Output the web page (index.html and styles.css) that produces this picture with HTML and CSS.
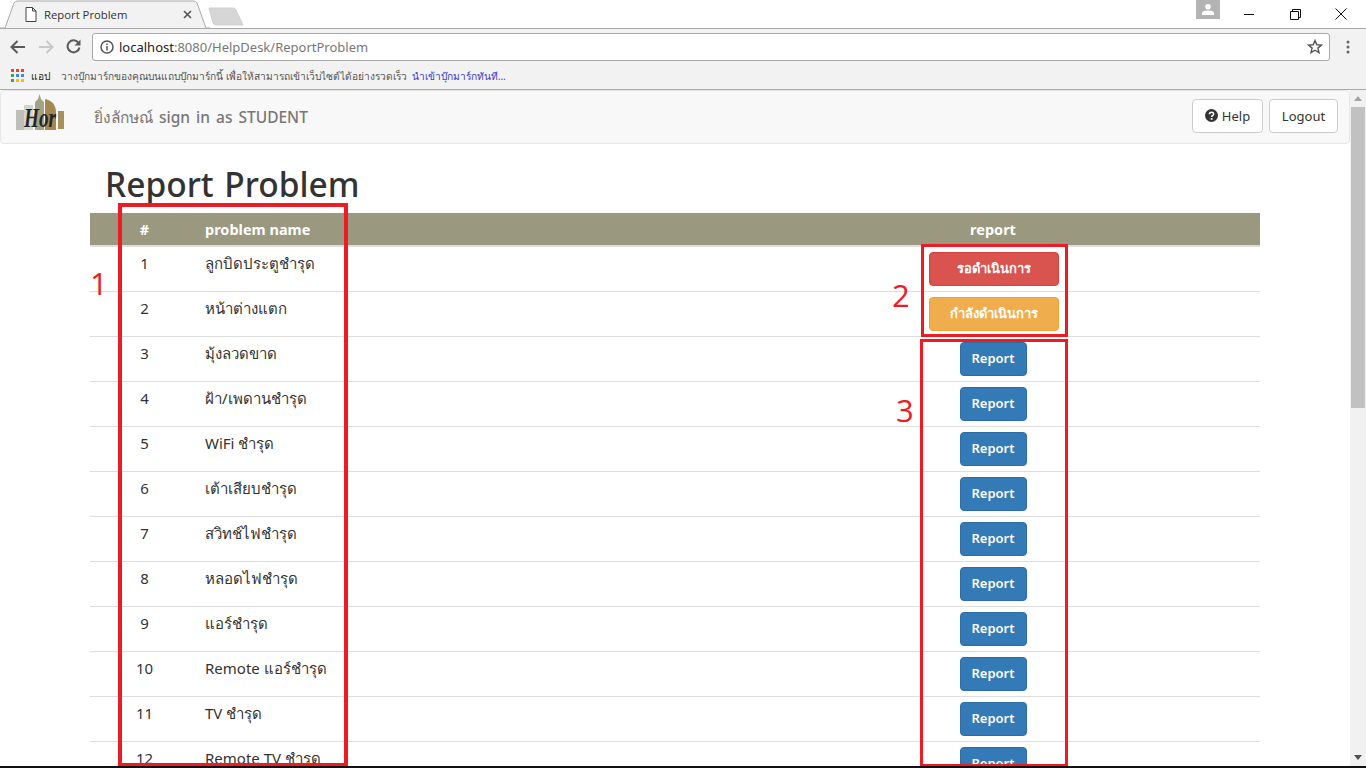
FILE: index.html
```html
<!DOCTYPE html>
<html lang="th">

<head>
    <meta charset="UTF-8">
    <meta name="viewport" content="width=device-width, initial-scale=1.0">
    <title>Report Problem</title>
    <link rel="stylesheet" href="styles.css">
</head>

<body>
    <div class="tabstrip">
        <div class="tab">
            <svg class="tab-shape" width="210" height="29" viewBox="0 0 210 29">
                <path d="M0 28H5L14 3Q15 1 18 1H193Q196 1 197 3L206 28H210" fill="#f2f2f2" stroke="#a9a9a9" />
            </svg>
            <svg class="tab-icon" width="12" height="15" viewBox="0 0 12 15">
                <path d="M1 .5H7.500L11 4V14.500H1ZM7.500 .5V4H11" fill="#fff" stroke="#444" />
            </svg>
            <span class="tab-title">Report Problem</span>
            <svg class="tab-close" width="9" height="9" viewBox="0 0 9 9">
                <path d="M1 1L8 8M8 1L1 8" stroke="#555" stroke-width="1.600" />
            </svg>
        </div>
        <svg class="new-tab" width="36" height="19" viewBox="0 0 36 19">
            <path d="M1 1H25Q27 1 28 3L35 18H8Q6 18 5 16Z" fill="#d6d6d6" stroke="#d0d0d0" />
        </svg>
        <div class="window-controls">
            <div class="profile">
                <svg width="12" height="11" viewBox="0 0 12 11">
                    <circle cx="6" cy="2.800" r="2.800" fill="#fff" />
                    <path d="M0 11V8.500Q1 6.500 6 6.500T12 8.500V11Z" fill="#fff" />
                </svg>
            </div>
            <svg class="win-btn" width="46" height="12" viewBox="0 0 46 12">
                <path d="M18 6.500H28" stroke="#111" />
            </svg>
            <svg class="win-btn" width="46" height="12" viewBox="0 0 46 12">
                <path d="M18.500 3.500H26.500V11.500H18.500ZM20.500 3.500V1.500H28.500V9.500H26.500" fill="none" stroke="#111" />
            </svg>
            <svg class="win-btn" width="46" height="12" viewBox="0 0 46 12">
                <path d="M17.500 .5L28.500 11.500M28.500 .5L17.500 11.500" stroke="#111" />
            </svg>
        </div>
    </div>

    <div class="toolbar">
        <svg class="nav-icon" width="16" height="14" viewBox="0 0 16 14">
            <path d="M15 7H2M7.500 1L1.500 7L7.500 13" fill="none" stroke="#5a5a5a" stroke-width="2" />
        </svg>
        <svg class="nav-icon" width="16" height="14" viewBox="0 0 16 14">
            <path d="M1 7H14M8.500 1L14.500 7L8.500 13" fill="none" stroke="#c9c9c9" stroke-width="2" />
        </svg>
        <svg class="nav-icon" width="15" height="15" viewBox="0 0 15 15">
            <path d="M12.600 4A6 6 0 1 0 13.500 8.500" fill="none" stroke="#5a5a5a" stroke-width="2" />
            <path d="M14.500 .5V6.500H8.500Z" fill="#5a5a5a" />
        </svg>
        <div class="urlbar">
            <svg width="14" height="14" viewBox="0 0 14 14">
                <circle cx="7" cy="7" r="6" fill="none" stroke="#555" stroke-width="1.500" />
                <path d="M7 6V10.500M7 3.500V5" stroke="#555" stroke-width="1.500" />
            </svg>
            <span class="url"><span class="url-host">localhost</span>:8080/HelpDesk/ReportProblem</span>
            <svg class="star" width="16" height="15" viewBox="0 0 16 15">
                <path d="M8 1.500L9.800 5.800L14.500 6.100L10.900 9.100L12 13.600L8 11.200L4 13.600L5.100 9.100L1.500 6.100L6.200 5.800Z" fill="none" stroke="#555" stroke-width="1.400" />
            </svg>
        </div>
        <svg class="menu-dots" width="4" height="14" viewBox="0 0 4 14">
            <circle cx="2" cy="2" r="1.500" fill="#666" />
            <circle cx="2" cy="7" r="1.500" fill="#666" />
            <circle cx="2" cy="12" r="1.500" fill="#666" />
        </svg>
    </div>

    <div class="bookmarks">
        <svg width="13" height="13" viewBox="0 0 13 13">
            <rect x="0" y="0" width="3" height="3" fill="#ea4335" />
            <rect x="5" y="0" width="3" height="3" fill="#ea4335" />
            <rect x="10" y="0" width="3" height="3" fill="#ea4335" />
            <rect x="0" y="5" width="3" height="3" fill="#34a853" />
            <rect x="5" y="5" width="3" height="3" fill="#4285f4" />
            <rect x="10" y="5" width="3" height="3" fill="#4285f4" />
            <rect x="0" y="10" width="3" height="3" fill="#34a853" />
            <rect x="5" y="10" width="3" height="3" fill="#fbbc05" />
            <rect x="10" y="10" width="3" height="3" fill="#fbbc05" />
        </svg>
        <span class="apps-label">แอป</span>
        <span class="bookmarks-hint">วางบุ๊กมาร์กของคุณบนแถบบุ๊กมาร์กนี้ เพื่อให้สามารถเข้าเว็บไซต์ได้อย่างรวดเร็ว</span>
        <span class="bookmarks-link">นำเข้าบุ๊กมาร์กทันที...</span>
    </div>

    <div class="viewport">
        <div class="page">
            <nav class="navbar">
                <svg class="logo" width="60" height="42" viewBox="0 0 60 42">
                    <rect x="1" y="16" width="8" height="20" fill="#bcc0b8" />
                    <rect x="9" y="11" width="9" height="25" fill="#d5d5cc" />
                    <path d="M20 36V8L23 5L24.500 0L26 5L29 8V36Z" fill="#a3a487" />
                    <path d="M30 36V5Q41 7 41 19V36Z" fill="#a6874f" />
                    <rect x="43" y="17" width="6" height="18" fill="#a8905c" />
                    <text class="logo-text" x="9" y="33" textLength="32" lengthAdjust="spacingAndGlyphs">Hor</text>
                </svg>
                <span class="navbar-user">ยิ่งลักษณ์ sign in as STUDENT</span>
                <div class="navbar-actions">
                    <a class="btn btn-default btn-help">
                        <svg width="13" height="13" viewBox="0 0 13 13">
                            <circle cx="6.500" cy="6.500" r="6.500" fill="#333" />
                            <path d="M4.400 5.200Q4.500 3.200 6.500 3.200T8.700 5Q8.700 6 7.500 6.700Q6.600 7.200 6.600 8" fill="none" stroke="#fff" stroke-width="1.500" />
                            <rect x="5.700" y="9" width="1.800" height="1.800" fill="#fff" />
                        </svg>
                        Help
                    </a>
                    <a class="btn btn-default btn-logout">Logout</a>
                </div>
            </nav>

            <div class="container">
                <h1 class="page-title">Report Problem</h1>
                <table class="problem-table">
                    <thead>
                        <tr>
                            <th class="col-num">#</th>
                            <th class="col-name">problem name</th>
                            <th class="col-report">report</th>
                        </tr>
                    </thead>
                    <tbody>
                        <tr>
                            <td class="col-num">1</td>
                            <td class="col-name">ลูกบิดประตูชำรุด</td>
                            <td class="col-report"><a class="btn btn-status btn-danger">รอดำเนินการ</a></td>
                        </tr>
                        <tr>
                            <td class="col-num">2</td>
                            <td class="col-name">หน้าต่างแตก</td>
                            <td class="col-report"><a class="btn btn-status btn-warning">กำลังดำเนินการ</a></td>
                        </tr>
                        <tr>
                            <td class="col-num">3</td>
                            <td class="col-name">มุ้งลวดขาด</td>
                            <td class="col-report"><a class="btn btn-primary">Report</a></td>
                        </tr>
                        <tr>
                            <td class="col-num">4</td>
                            <td class="col-name">ฝ้า/เพดานชำรุด</td>
                            <td class="col-report"><a class="btn btn-primary">Report</a></td>
                        </tr>
                        <tr>
                            <td class="col-num">5</td>
                            <td class="col-name">WiFi ชำรุด</td>
                            <td class="col-report"><a class="btn btn-primary">Report</a></td>
                        </tr>
                        <tr>
                            <td class="col-num">6</td>
                            <td class="col-name">เต้าเสียบชำรุด</td>
                            <td class="col-report"><a class="btn btn-primary">Report</a></td>
                        </tr>
                        <tr>
                            <td class="col-num">7</td>
                            <td class="col-name">สวิทช์ไฟชำรุด</td>
                            <td class="col-report"><a class="btn btn-primary">Report</a></td>
                        </tr>
                        <tr>
                            <td class="col-num">8</td>
                            <td class="col-name">หลอดไฟชำรุด</td>
                            <td class="col-report"><a class="btn btn-primary">Report</a></td>
                        </tr>
                        <tr>
                            <td class="col-num">9</td>
                            <td class="col-name">แอร์ชำรุด</td>
                            <td class="col-report"><a class="btn btn-primary">Report</a></td>
                        </tr>
                        <tr>
                            <td class="col-num">10</td>
                            <td class="col-name">Remote แอร์ชำรุด</td>
                            <td class="col-report"><a class="btn btn-primary">Report</a></td>
                        </tr>
                        <tr>
                            <td class="col-num">11</td>
                            <td class="col-name">TV ชำรุด</td>
                            <td class="col-report"><a class="btn btn-primary">Report</a></td>
                        </tr>
                        <tr>
                            <td class="col-num">12</td>
                            <td class="col-name">Remote TV ชำรุด</td>
                            <td class="col-report"><a class="btn btn-primary">Report</a></td>
                        </tr>
                    </tbody>
                </table>
            </div>

            <!-- red marks drawn over the screenshot -->
            <div class="mark mark-names"></div>
            <div class="mark mark-status"></div>
            <div class="mark mark-reports"></div>
            <span class="mark-label mark-label-1">1</span>
            <span class="mark-label mark-label-2">2</span>
            <span class="mark-label mark-label-3">3</span>
        </div>

        <div class="scrollbar">
            <svg width="16" height="17" viewBox="0 0 16 17">
                <path d="M4 11L8 6L12 11Z" fill="#a3a3a3" />
            </svg>
            <div class="scroll-thumb"></div>
            <svg class="scroll-down" width="16" height="17" viewBox="0 0 16 17">
                <path d="M4 6L8 11L12 6Z" fill="#505050" />
            </svg>
        </div>
    </div>
    <div class="screen-edge"></div>
</body>

</html>
```

FILE: styles.css
```css
* {
    box-sizing: border-box;
}

body {
    display: flex;
    flex-direction: column;
    height: 768px;
    margin: 0;
    overflow: hidden;
    background-color: #fff;
    color: #333;
    font-family: "Noto Sans", "Open Sans", sans-serif;
}

/* browser chrome */
.tabstrip {
    display: flex;
    align-items: flex-start;
    height: 29px;
    flex-shrink: 0;
    background: linear-gradient(#fff 28px, #a9a9a9 28px);
    font-family: "Open Sans", sans-serif;
}

.tab {
    position: relative;
    display: flex;
    align-items: center;
    width: 210px;
    height: 29px;
    padding: 0 18px 0 25px;
}

.tab-shape {
    position: absolute;
    top: 0;
    left: 0;
}

.tab-icon,
.tab-title,
.tab-close {
    position: relative;
}

.tab-title {
    flex: 1;
    margin-left: 7px;
    font-size: 11.300px;
    color: #333;
}

.new-tab {
    margin: 7px 0 0 -2px;
}

.window-controls {
    display: flex;
    align-items: flex-start;
    margin-left: auto;
    margin-right: 2px;
}

.profile {
    display: flex;
    justify-content: center;
    align-items: center;
    width: 24px;
    height: 19px;
    margin-right: 6px;
    background-color: #b3b3b3;
}

.win-btn {
    margin-top: 8px;
}

.toolbar {
    display: flex;
    align-items: center;
    height: 33px;
    flex-shrink: 0;
    padding: 2px 0 0 10px;
    background-color: #f2f2f2;
}

.nav-icon {
    margin-right: 12px;
}

.urlbar {
    display: flex;
    align-items: center;
    width: 1238px;
    height: 28px;
    margin-left: -1px;
    padding: 0 6px 0 7px;
    border: 1px solid #a9a9a9;
    border-radius: 3px;
    background-color: #fff;
}

.url {
    flex: 1;
    margin-left: 5px;
    font-size: 13px;
    color: #777;
}

.url-host {
    color: #222;
}

.menu-dots {
    margin-left: 16px;
}

.bookmarks {
    display: flex;
    align-items: center;
    height: 28px;
    flex-shrink: 0;
    padding-left: 11px;
    background-color: #f2f2f2;
    border-bottom: 1px solid #a9a9a9;
    font-size: 10.200px;
    color: #555;
}

.apps-label {
    margin: 0 11px 0 7px;
    color: #222;
}

.bookmarks-link {
    margin-left: 5px;
    color: #3a3ad0;
}

/* page */
.viewport {
    display: flex;
    flex: 1;
    min-height: 0;
}

.page {
    position: relative;
    flex: 1;
    overflow: hidden;
}

.navbar {
    display: flex;
    align-items: center;
    height: 54px;
    padding: 0 11px 0 14px;
    background-color: #f8f8f8;
    border: 1px solid #e7e7e7;
    border-radius: 4px;
}

.logo {
    margin-bottom: 4px;
}

.logo-text {
    font-family: "Liberation Serif", serif;
    font-size: 28px;
    font-style: italic;
    font-weight: bold;
    fill: #23262a;
}

.navbar-user {
    margin: 1px 0 0 19px;
    font-size: 15.500px;
    font-weight: 500;
    word-spacing: 2px;
    color: #777;
}

.navbar-actions {
    display: flex;
    gap: 6px;
    margin: 0 0 2px auto;
}

.btn {
    display: inline-flex;
    align-items: center;
    justify-content: center;
    gap: 4px;
    height: 34px;
    padding: 0 12px 2px;
    border: 1px solid transparent;
    border-radius: 4px;
    font-size: 13px;
    line-height: 20px;
}

.btn-default {
    background-color: #fff;
    border-color: #ccc;
    color: #333;
}

.btn-help {
    width: 71px;
    padding: 0 0 1px;
}

.btn-logout {
    width: 69px;
    padding: 0 0 1px;
}

.btn-primary {
    width: 67px;
    background-color: #337ab7;
    border-color: #2e6da4;
    color: #fff;
    font-weight: 600;
}

.btn-status {
    width: 130px;
    margin-left: 1px;
    color: #fff;
    font-weight: 600;
}

.btn-danger {
    background-color: #d9534f;
    border-color: #d43f3a;
}

.btn-warning {
    background-color: #f0ad4e;
    border-color: #eea236;
}

.container {
    width: 1170px;
    margin-left: 90px;
}

.page-title {
    height: 49px;
    margin: 20px 0 0 15px;
    font-size: 33.500px;
    font-weight: 500;
    line-height: 40px;
    word-spacing: 2px;
    color: #333;
}

.problem-table {
    width: 100%;
    border-collapse: collapse;
    table-layout: fixed;
    font-size: 15px;
    line-height: 20px;
}

.problem-table th {
    height: 33px;
    padding: 0 8px;
    background-color: #9a987e;
    border-bottom: 2px solid #ddd;
    color: #fff;
    font-size: 14.500px;
    font-weight: 700;
    text-align: left;
}

.problem-table td {
    height: 45px;
    padding: 5px 8px;
    border-bottom: 1px solid #ddd;
    vertical-align: top;
}

.problem-table th.col-num,
.problem-table td.col-num {
    width: 109px;
    text-align: center;
}

.problem-table th.col-name,
.problem-table td.col-name {
    padding-left: 6px;
}

.problem-table td.col-num,
.problem-table td.col-name {
    padding-top: 6px;
}

.problem-table th.col-report,
.problem-table td.col-report {
    width: 534px;
    text-align: center;
}

/* red annotation marks */
.mark {
    position: absolute;
    border: 3px solid #ed1c24;
}

.mark-names {
    top: 113px;
    left: 118px;
    width: 230px;
    height: 564px;
    border-width: 4.500px;
}

.mark-status {
    top: 154px;
    left: 921px;
    width: 147px;
    height: 93px;
}

.mark-reports {
    top: 249px;
    left: 920px;
    width: 148px;
    height: 428px;
}

.mark-label {
    position: absolute;
    font-family: "Open Sans", sans-serif;
    font-size: 31px;
    line-height: 36px;
    color: #ed1c24;
}

.mark-label-1 {
    top: 175px;
    left: 90px;
}

.mark-label-2 {
    top: 187px;
    left: 892px;
}

.mark-label-3 {
    top: 302px;
    left: 896px;
}

/* scrollbar */
.scrollbar {
    position: relative;
    display: flex;
    flex-direction: column;
    align-items: center;
    width: 16px;
    flex-shrink: 0;
    background-color: #f1f1f1;
}

.scroll-thumb {
    width: 14px;
    height: 301px;
    background-color: #c1c1c1;
}

.scroll-down {
    margin-top: auto;
}

.screen-edge {
    height: 2px;
    flex-shrink: 0;
    background-color: #111;
}
```
